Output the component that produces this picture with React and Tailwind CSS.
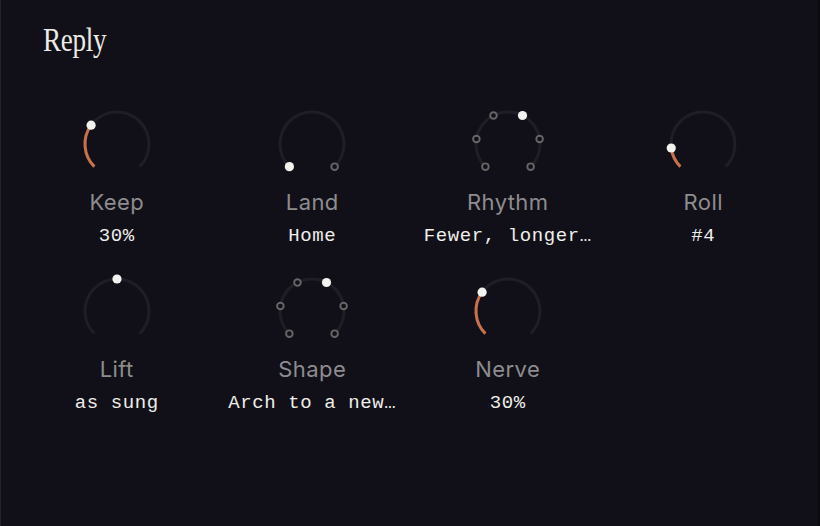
import React from "react";

const START = -135;
const SWEEP = 270;

function pt(a, r = 32, c = 40) {
  const rad = (a * Math.PI) / 180;
  return [c + r * Math.sin(rad), c - r * Math.cos(rad)];
}

function arc(a0, a1, r = 32) {
  const [x0, y0] = pt(a0, r);
  const [x1, y1] = pt(a1, r);
  const large = a1 - a0 > 180 ? 1 : 0;
  return `M ${x0} ${y0} A ${r} ${r} 0 ${large} 1 ${x1} ${y1}`;
}

function Knob({ value = 0, from = 0, steps }) {
  const track = arc(START, START + SWEEP);
  if (steps) {
    return (
      <svg width="80" height="80" viewBox="0 0 80 80">
        <path d={track} fill="none" stroke="#1e1e27" strokeWidth="3" />
        {Array.from({ length: steps }).map((_, i) => {
          const a = START + (SWEEP * i) / (steps - 1);
          const [x, y] = pt(a);
          return i === value ? (
            <circle key={i} cx={x} cy={y} r="4.6" fill="#f2f2ee" />
          ) : (
            <circle key={i} cx={x} cy={y} r="3.3" fill="#111018" stroke="#666667" strokeWidth="1.9" />
          );
        })}
      </svg>
    );
  }
  const a = START + SWEEP * value;
  const aFrom = START + SWEEP * from;
  const [dx, dy] = pt(a);
  return (
    <svg width="80" height="80" viewBox="0 0 80 80">
      <path d={track} fill="none" stroke="#1e1e27" strokeWidth="3" />
      {Math.abs(a - aFrom) > 0.5 && (
        <path d={arc(Math.min(a, aFrom), Math.max(a, aFrom))} fill="none" stroke="#c8714a" strokeWidth="3" />
      )}
      <circle cx={dx} cy={dy} r="4.6" fill="#f2f2ee" />
    </svg>
  );
}

const knobs = [
  { label: "Keep", value: "30%", knob: { value: 0.3 } },
  { label: "Land", value: "Home", knob: { steps: 2, value: 0 } },
  { label: "Rhythm", value: "Fewer, longer…", knob: { steps: 6, value: 3 } },
  { label: "Roll", value: "#4", knob: { value: 0.14 } },
  { label: "Lift", value: "as sung", knob: { value: 0.5, from: 0.5 } },
  { label: "Shape", value: "Arch to a new…", knob: { steps: 6, value: 3 } },
  { label: "Nerve", value: "30%", knob: { value: 0.3 } },
];

export default function App() {
  return (
    <div className="w-[820px] h-[526px] bg-[#111018] border-l border-[#22222a] border-r-2 border-r-[#0b0a10] overflow-hidden">
      <h1 className="pl-[42px] pt-[21px] leading-[38px]">
        <span
          className="inline-block origin-left scale-x-[0.82] text-[33px] tracking-[-0.3px] text-[#ecebe6]"
          style={{ fontFamily: '"Liberation Serif", serif' }}
        >
          Reply
        </span>
      </h1>
      <div className="grid grid-cols-4 w-[782px] ml-[18px] mt-[40px] gap-y-[24px]">
        {knobs.map((k) => (
          <div key={k.label} className="flex flex-col items-center">
            <Knob {...k.knob} />
            <div
              className="mt-[6px] text-[22px] leading-[24px] tracking-[0.4px] text-[#8d8c8e]"
              style={{ fontFamily: "Inter, sans-serif" }}
            >
              {k.label}
            </div>
            <div
              className="mt-[11px] text-[19px] leading-[22px] tracking-[0.6px] text-[#efeeea] whitespace-nowrap"
              style={{ fontFamily: '"Liberation Mono", monospace' }}
            >
              {k.value}
            </div>
          </div>
        ))}
      </div>
    </div>
  );
}
